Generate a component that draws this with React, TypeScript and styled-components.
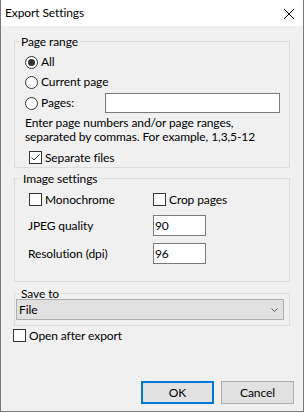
import React from 'react';
import styled, { createGlobalStyle } from 'styled-components';

const Global = createGlobalStyle`
  html, body { margin: 0; padding: 0; background: #ffffff; }
  body {
    font-family: Lato, "Noto Sans", "Liberation Sans", sans-serif;
    font-size: 12px;
    letter-spacing: -0.1px;
    color: #000;
  }
  * { box-sizing: border-box; }
`;

const Window = styled.div`
  width: 304px;
  height: 412px;
  display: flex;
  flex-direction: column;
  border: 1px solid #777777;
  border-top: none;
  background: #f0f0f0;
`;

const TitleBar = styled.div`
  height: 26px;
  flex: none;
  background: #ffffff;
  display: flex;
  align-items: center;
  justify-content: space-between;
  padding: 0 9px 0 4px;
  font-size: 12px;
  line-height: 16px;
`;

const CloseIcon = styled.svg`
  display: block;
  margin-top: 2px;
`;

const Body = styled.div`
  flex: 1;
  display: flex;
  flex-direction: column;
  padding: 8px 9px 7px 13px;
`;

const Group = styled.fieldset<{ $mt: number }>`
  margin: ${(p) => p.$mt}px 0 0 0;
  padding: 0;
  width: 276px;
  min-width: 0;
  border: 1px solid #dcdcdc;
`;

const Legend = styled.legend<{ $ml: number; $h: number }>`
  margin-left: ${(p) => p.$ml}px;
  padding: 0 2px;
  height: ${(p) => p.$h}px;
  line-height: ${(p) => p.$h}px;
  font-size: 12px;
`;

const GroupContent = styled.div<{ $pad: string }>`
  display: flex;
  flex-direction: column;
  padding: ${(p) => p.$pad};
`;

const Row = styled.div<{ $h: number; $mt?: number; $ml?: number }>`
  display: flex;
  align-items: center;
  height: ${(p) => p.$h}px;
  margin-top: ${(p) => p.$mt ?? 0}px;
  margin-left: ${(p) => p.$ml ?? 0}px;
`;

const Cell = styled.div<{ $w: number }>`
  width: ${(p) => p.$w}px;
  flex: none;
  display: flex;
  align-items: center;
`;

const Choice = styled.label<{ $w?: number }>`
  display: flex;
  align-items: center;
  gap: 3px;
  line-height: 16px;
  white-space: nowrap;
  width: ${(p) => (p.$w ? `${p.$w}px` : 'auto')};
  flex: none;
`;

const RadioCircle = styled.span<{ $on?: boolean }>`
  width: 13px;
  height: 13px;
  border-radius: 50%;
  border: 1px solid #333333;
  background: #ffffff;
  display: flex;
  align-items: center;
  justify-content: center;
  flex: none;
  &::after {
    content: '';
    display: ${(p) => (p.$on ? 'block' : 'none')};
    width: 7px;
    height: 7px;
    border-radius: 50%;
    background: #333333;
  }
`;

const CheckBox = styled.span`
  width: 13px;
  height: 13px;
  border: 1px solid #333333;
  background: #ffffff;
  display: block;
  flex: none;
`;

const TextBox = styled.div<{ $w: number; $h: number }>`
  width: ${(p) => p.$w}px;
  height: ${(p) => p.$h}px;
  border: 1px solid #7a7a7a;
  background: #ffffff;
  padding: 0 1px;
  display: flex;
  align-items: center;
  flex: none;
  line-height: 16px;
`;

const HelpText = styled.div`
  margin-top: 3px;
  line-height: 14px;
  white-space: nowrap;
`;

const FieldLabel = styled.span`
  margin-left: -1px;
  line-height: 16px;
`;

const Select = styled.div`
  width: 268px;
  height: 21px;
  background: #e1e1e1;
  border: 1px solid #adadad;
  display: flex;
  align-items: center;
  justify-content: space-between;
  padding: 0 5px 0 2px;
  line-height: 16px;
`;

const Buttons = styled.div`
  margin-top: auto;
  display: flex;
  justify-content: flex-end;
  gap: 7px;
`;

const Button = styled.button<{ $primary?: boolean }>`
  width: 73px;
  height: 23px;
  padding: 0;
  margin: 0;
  background: #e1e1e1;
  border: ${(p) => (p.$primary ? '2px solid #0078d7' : '1px solid #adadad')};
  font-family: inherit;
  font-size: 12px;
  letter-spacing: inherit;
  color: #000;
  line-height: 16px;
`;

const Radio = ({ on, label, w }: { on?: boolean; label: string; w?: number }) => (
  <Choice $w={w}>
    <RadioCircle $on={on} />
    <span>{label}</span>
  </Choice>
);

const Check = ({ on, label }: { on?: boolean; label: string }) => (
  <Choice>
    <CheckBox>
      {on && (
        <svg width="11" height="11" viewBox="0 0 11 11" style={{ display: 'block' }}>
          <polyline points="1.5,5.5 4,8 9.5,2.5" fill="none" stroke="#333" strokeWidth="1" />
        </svg>
      )}
    </CheckBox>
    <span>{label}</span>
  </Choice>
);

export default function App() {
  return (
    <>
      <Global />
      <Window>
        <TitleBar>
          <span>Export Settings</span>
          <CloseIcon width="10" height="10" viewBox="0 0 10 10">
            <line x1="0" y1="0" x2="10" y2="10" stroke="#000" strokeWidth="1" />
            <line x1="10" y1="0" x2="0" y2="10" stroke="#000" strokeWidth="1" />
          </CloseIcon>
        </TitleBar>
        <Body>
          <Group $mt={0}>
            <Legend $ml={4} $h={15}>Page range</Legend>
            <GroupContent $pad="3px 9px 2px 10px">
              <Row $h={20}>
                <Radio on label="All" />
              </Row>
              <Row $h={20}>
                <Radio label="Current page" />
              </Row>
              <Row $h={20} $mt={1}>
                <Radio label="Pages:" w={80} />
                <TextBox $w={175} $h={20} />
              </Row>
              <HelpText>
                Enter page numbers and/or page ranges,
                <br />
                separated by commas. For example, 1,3,5-12
              </HelpText>
              <Row $h={15} $mt={6} $ml={4}>
                <Check on label="Separate files" />
              </Row>
            </GroupContent>
          </Group>

          <Group $mt={3}>
            <Legend $ml={6} $h={15}>Image settings</Legend>
            <GroupContent $pad="7px 9px 17px 14px">
              <Row $h={13}>
                <Cell $w={124}>
                  <Check label="Monochrome" />
                </Cell>
                <Cell $w={120}>
                  <Check label="Crop pages" />
                </Cell>
              </Row>
              <Row $h={21} $mt={9}>
                <Cell $w={124}>
                  <FieldLabel>JPEG quality</FieldLabel>
                </Cell>
                <TextBox $w={53} $h={21}>90</TextBox>
              </Row>
              <Row $h={21} $mt={7}>
                <Cell $w={124}>
                  <FieldLabel>Resolution (dpi)</FieldLabel>
                </Cell>
                <TextBox $w={53} $h={21}>96</TextBox>
              </Row>
            </GroupContent>
          </Group>

          <Group $mt={6}>
            <Legend $ml={4} $h={11}>Save to</Legend>
            <GroupContent $pad="0 5px 5px 1px">
              <Select role="combobox">
                <span>File</span>
                <svg width="7" height="4" viewBox="0 0 7 4" style={{ display: 'block' }}>
                  <polyline points="0.5,0.5 3.5,3.5 6.5,0.5" fill="none" stroke="#555" strokeWidth="1" />
                </svg>
              </Select>
            </GroupContent>
          </Group>

          <Row $h={13} $mt={3} $ml={-1}>
            <Check label="Open after export" />
          </Row>

          <Buttons>
            <Button $primary>OK</Button>
            <Button>Cancel</Button>
          </Buttons>
        </Body>
      </Window>
    </>
  );
}
